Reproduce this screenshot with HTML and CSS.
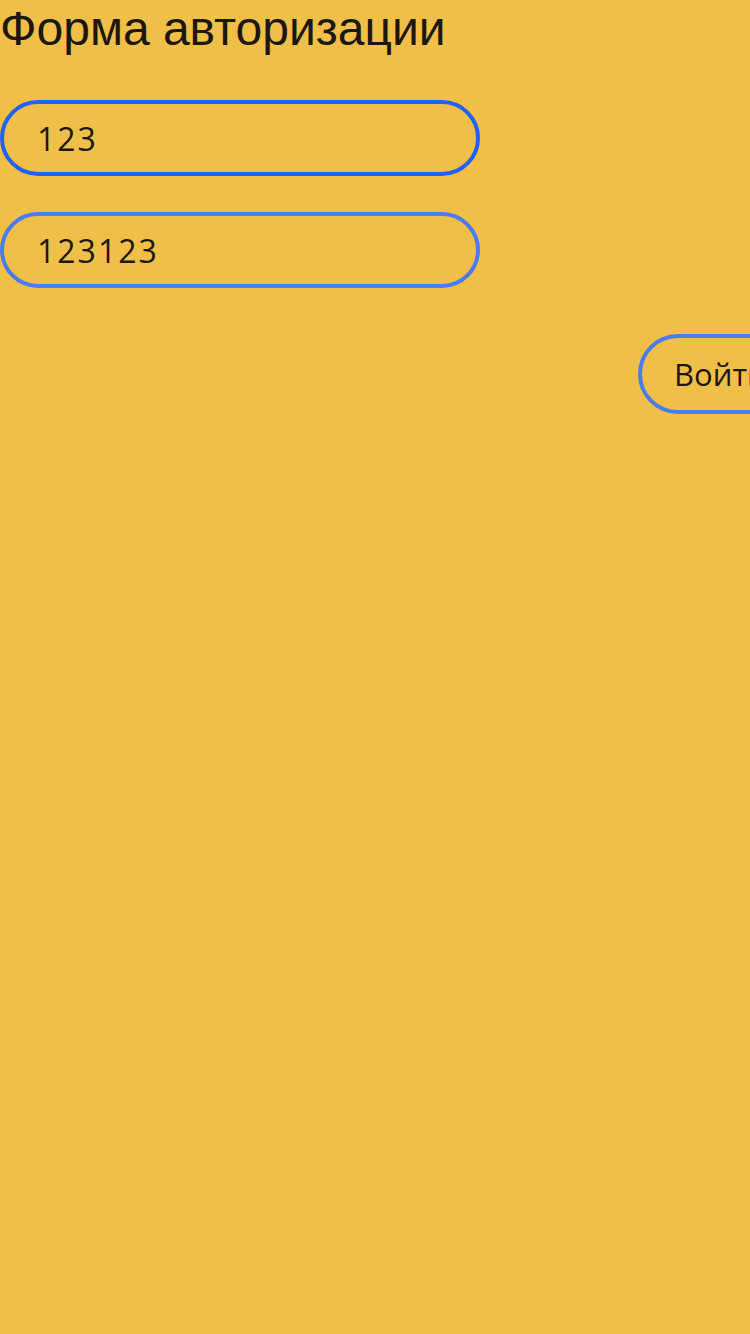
FILE: index.html
```html
<!DOCTYPE html>
<html lang="ru">
<head>
<meta charset="utf-8">
<link rel="stylesheet" href="styles.css">
</head>
<body>
<div class="page">
  <h1 class="title">Форма авторизации</h1>
  <form class="form">
    <input class="field field--focus" type="text" value="123">
    <input class="field" type="text" value="123123">
    <div class="actions">
      <button class="btn" type="button">Войти</button>
    </div>
  </form>
</div>
</body>
</html>
```
FILE: styles.css
```css
html, body {
  margin: 0;
  padding: 0;
  background: #f0bf48;
  overflow: hidden;
}
.page {
  width: 750px;
  height: 1334px;
  background: #f0bf48;
  overflow: hidden;
}
.title {
  margin: 0;
  font-family: "Liberation Sans", Arial, sans-serif;
  font-weight: 400;
  font-size: 48px;
  line-height: 58px;
  color: #1c1710;
}
.form {
  display: flex;
  flex-direction: column;
  gap: 36px;
  margin-top: 42px;
}
.field {
  box-sizing: border-box;
  width: 480px;
  height: 76px;
  margin: 0;
  padding: 0 0 0 33px;
  border: 4px solid #4a7bf0;
  border-radius: 38px;
  background: transparent;
  font-family: "Open Sans", "Noto Sans", sans-serif;
  font-size: 32px;
  letter-spacing: 2px;
  color: #1c1710;
  outline: none;
}
.field--focus {
  border-color: #2360f5;
}
.actions {
  display: flex;
  padding-left: 638px;
  margin-top: 10px;
}
.btn {
  box-sizing: border-box;
  flex: none;
  width: 220px;
  height: 80px;
  padding: 0 0 0 32px;
  text-align: left;
  border: 4px solid #4a7bf0;
  border-radius: 40px;
  background: transparent;
  font-family: "Open Sans", "Noto Sans", sans-serif;
  font-size: 31px;
  color: #1c1710;
}
```
